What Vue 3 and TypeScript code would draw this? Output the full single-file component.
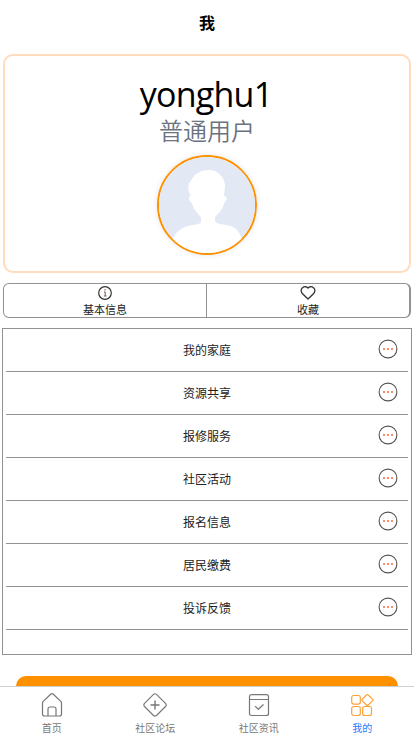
<script setup lang="ts">
import { ref } from 'vue'

interface Tab { key: string; label: string }

const username = ref<string>('yonghu1')
const role = ref<string>('普通用户')
const menu: string[] = ['我的家庭', '资源共享', '报修服务', '社区活动', '报名信息', '居民缴费', '投诉反馈']
const tabs: Tab[] = [
  { key: 'home', label: '首页' },
  { key: 'forum', label: '社区论坛' },
  { key: 'news', label: '社区资讯' },
  { key: 'mine', label: '我的' },
]
const active = ref<string>('mine')
</script>

<template>
  <div class="page">
    <header class="title">我</header>
    <main class="content">
      <section class="profile">
        <div class="name">{{ username }}</div>
        <div class="role">{{ role }}</div>
        <div class="avatar">
          <svg viewBox="0 0 96 96">
            <rect width="96" height="96" fill="#e2e8f4" />
            <path fill="#fff" d="M49 13C58 13 65 19 66 28C66 33 65 36 65 39C69 39 68 44 65 46C64 52 60 56 56 60V64C57 68 67 67 72 69C78 71 82 77 83 84V96H13V84C16 75 22 71 29 69C35 67 41 68 42 65V60C38 56 34 51 33 46C29 44 29 39 32 39C29 35 29 30 30 26C33 24 33 19 39 16C42 14 45 13 49 13Z" />
          </svg>
        </div>
      </section>

      <section class="actions">
        <div class="action">
          <svg class="action-icon" viewBox="0 0 16 16" fill="none" stroke="#333" stroke-width="1.2">
            <circle cx="8" cy="8" r="6.3" />
            <path d="M7 7h1.2v4M6.8 11h2.7" stroke="#755f50" stroke-width="1" />
            <path d="M7.4 4.8h1.3" stroke="#755f50" />
          </svg>
          <span>基本信息</span>
        </div>
        <div class="action">
          <svg class="action-icon" viewBox="0 0 16 16" fill="none" stroke="#333" stroke-width="1.3" stroke-linejoin="round">
            <path d="M8 3.1C6.8 1.5 4.3 1.2 2.5 2.7C.7 4.3.7 6.8 2.3 8.5L8 14L13.7 8.5C15.3 6.8 15.3 4.3 13.5 2.7C11.7 1.2 9.2 1.5 8 3.1Z" />
          </svg>
          <span>收藏</span>
        </div>
      </section>

      <section class="list">
        <div v-for="item in menu" :key="item" class="row">
          <span>{{ item }}</span>
          <svg class="more" viewBox="0 0 20 20">
            <circle cx="10" cy="10" r="8.9" fill="none" stroke="#555" stroke-width="1.1" />
            <path d="M5 9h2v2H5zM9 9h2v2H9zM13 9h2v2h-2z" fill="#ff8f6b" />
          </svg>
        </div>
      </section>

      <button class="logout" type="button" />
    </main>

    <nav class="tabbar">
      <div v-for="tab in tabs" :key="tab.key" class="tab" :class="{ active: tab.key === active }" @click="active = tab.key">
        <svg class="tab-icon" viewBox="0 0 24 24" fill="none" stroke="currentColor" stroke-width="1.2" stroke-linejoin="round">
          <template v-if="tab.key === 'home'">
            <path d="M10.7 1.2Q12 .1 13.3 1.2L20.8 8.4Q21.5 9.2 21.5 10.2V21Q21.5 23 19.5 23H4.5Q2.5 23 2.5 21V10.2Q2.5 9.2 3.2 8.4Z" />
            <path d="M8 23V16Q8 14 10 14H14Q16 14 16 16V23" />
          </template>
          <template v-else-if="tab.key === 'forum'">
            <path d="M10.5 1.4Q12 .1 13.5 1.4L22.5 10.4Q23.8 12 22.5 13.5L13.5 22.5Q12 23.8 10.5 22.5L1.5 13.5Q.2 12 1.5 10.4Z" />
            <path d="M12 7.5v9M7.5 12h9" stroke-width="1.4" />
          </template>
          <template v-else-if="tab.key === 'news'">
            <rect x="2.5" y="1.7" width="19" height="20.8" rx="2" />
            <path d="M2.5 6.5H21.5M8 13.1L11.4 16.3L16.5 11.5" />
          </template>
          <template v-else>
            <rect x="1.7" y="2.5" width="8.6" height="8.6" rx="2" />
            <rect x="1.7" y="13.5" width="8.6" height="9" rx="2" />
            <rect x="12.7" y="13.5" width="8.8" height="9" rx="2" />
            <path d="M16.4 2Q17.3 1.1 18.2 2L22.5 6.1Q23.3 7 22.5 7.9L18.2 12Q17.3 12.9 16.4 12L12.3 7.9Q11.5 7 12.3 6.1Z" />
          </template>
        </svg>
        <span class="tab-label">{{ tab.label }}</span>
      </div>
    </nav>
  </div>
</template>

<style>
body {
  margin: 0;
  background: #fff;
}
</style>

<style scoped>
.page {
  display: flex;
  flex-direction: column;
  height: 100vh;
  overflow: hidden;
  box-sizing: border-box;
  background: #fff;
  color: #000;
  font-family: "Open Sans", "Noto Sans CJK SC", sans-serif;
}
.title {
  flex: none;
  height: 44px;
  line-height: 46px;
  text-align: center;
  font-size: 16px;
  font-weight: 700;
}
.content {
  flex: 1;
  min-height: 0;
  overflow: hidden;
  display: flex;
  flex-direction: column;
  padding-top: 10px;
}
.content > * {
  flex: none;
  box-sizing: border-box;
}
.profile {
  height: 219px;
  margin: 0 3px;
  padding-top: 17px;
  border: 2px solid #ffdcbc;
  border-radius: 10px;
  display: flex;
  flex-direction: column;
  align-items: center;
}
.name {
  height: 44px;
  line-height: 42px;
  padding-right: 2px;
  font-size: 34px;
  letter-spacing: -0.75px;
}
.role {
  height: 28px;
  line-height: 28px;
  margin-bottom: 10px;
  font-size: 24px;
  font-weight: 350;
  color: #6b7280;
}
.avatar {
  width: 96px;
  height: 96px;
  border: 2px solid #ff9000;
  border-radius: 50%;
  overflow: hidden;
  box-shadow: 0 0 6px rgba(0, 0, 0, 0.1);
}
.avatar svg {
  display: block;
}
.actions {
  display: flex;
  height: 35px;
  margin: 10px 3px 0;
  border: 1px solid #929292;
  border-right-width: 2px;
  border-radius: 6px;
}
.action {
  flex: 1;
  display: flex;
  flex-direction: column;
  align-items: center;
  font-size: 11px;
  line-height: 18px;
  color: #222;
}
.action:first-child {
  border-right: 1px solid #929292;
}
.action-icon {
  flex: none;
  width: 16px;
  height: 16px;
  margin-top: 1px;
}
.list {
  height: 327px;
  margin: 10px 2px 0;
  padding: 0 3px;
  border: 1px solid #929292;
}
.row {
  display: grid;
  grid-template-columns: 40px 1fr 40px;
  align-items: center;
  height: 42px;
  border-bottom: 1px solid #929292;
  font-size: 12px;
  color: #222;
}
.row span {
  grid-column: 2;
  text-align: center;
}
.more {
  width: 20px;
  height: 20px;
  justify-self: center;
  margin-bottom: 2px;
}
.logout {
  height: 44px;
  margin: 21px 16px 0;
  padding: 0;
  border: 0;
  border-radius: 10px;
  background: #ff9000;
}
.tabbar {
  flex: none;
  display: flex;
  box-sizing: border-box;
  height: 50px;
  border-top: 1px solid #d0d0d0;
  background: #fff;
}
.tab {
  flex: 1;
  display: flex;
  flex-direction: column;
  align-items: center;
  padding-top: 6px;
  color: #777;
}
.tab-icon {
  width: 24px;
  height: 24px;
}
.tab-label {
  margin-top: 4px;
  font-size: 10px;
  line-height: 15px;
}
.active .tab-icon {
  color: #ffa238;
}
.active .tab-label {
  color: #2979ff;
}
</style>
